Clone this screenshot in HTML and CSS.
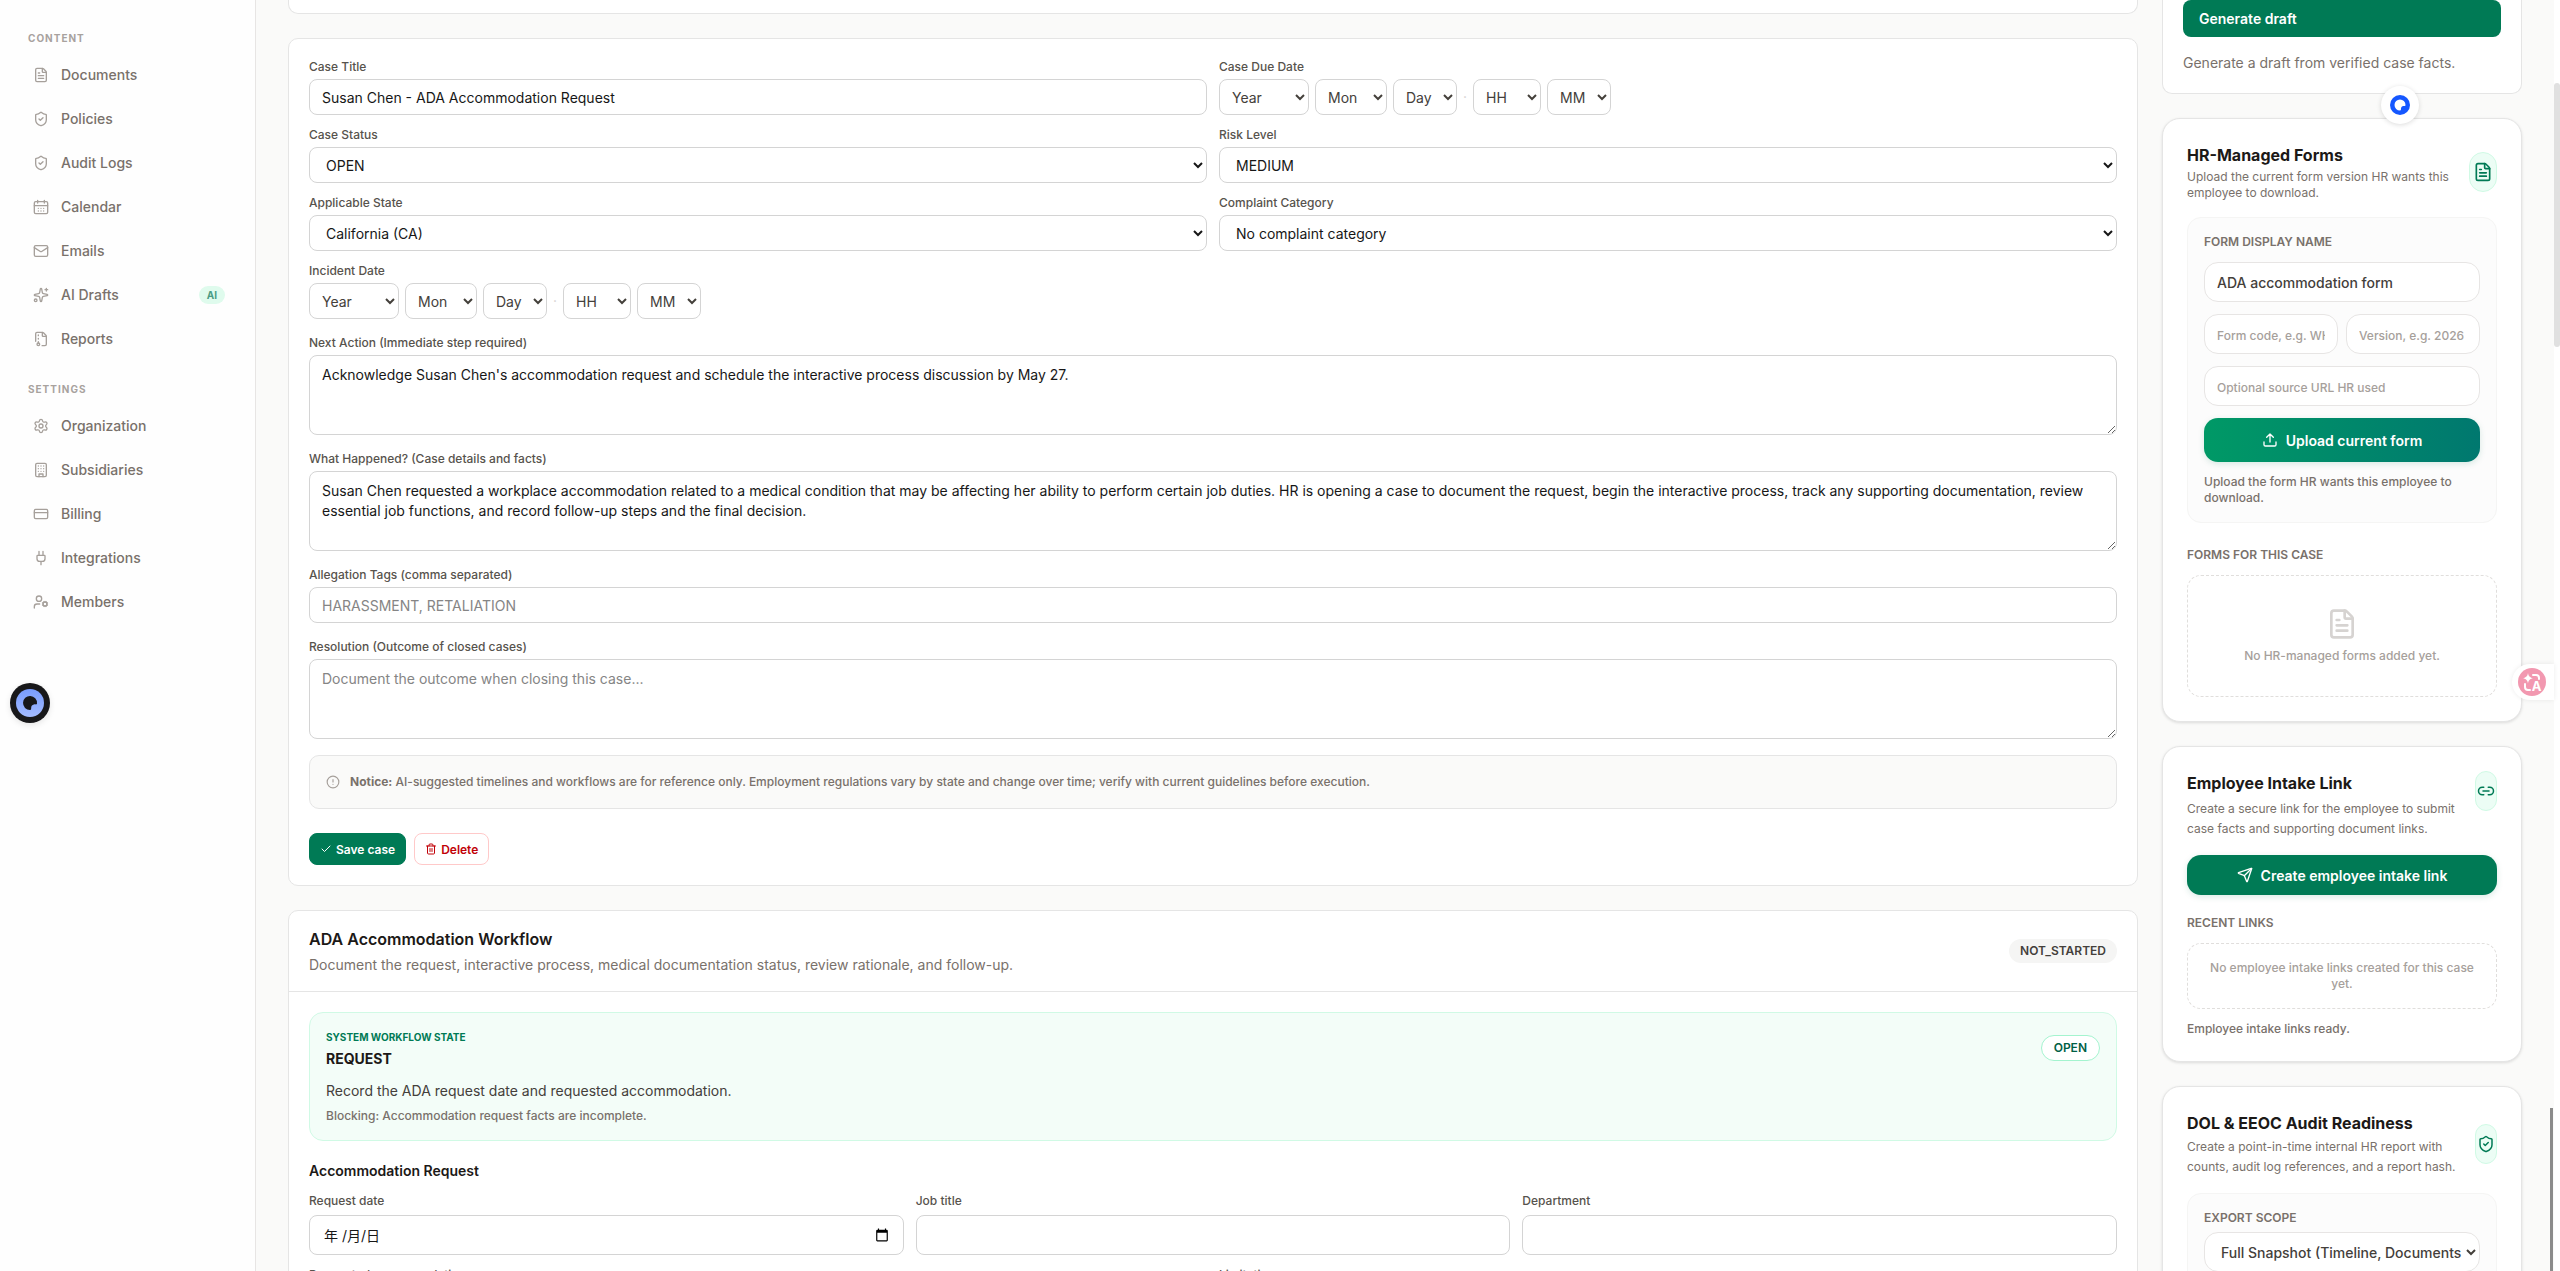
FILE: index.html
```html
<!DOCTYPE html>
<html lang="en">

<head>
    <meta charset="UTF-8">
    <meta name="viewport" content="width=device-width, initial-scale=1.0">
    <title>Susan Chen - ADA Accommodation Request</title>
    <link rel="stylesheet" href="styles.css">
</head>

<body>
    <!-- Shared icons -->
    <svg class="sprite" aria-hidden="true">
        <symbol id="icon-file" viewBox="0 0 24 24">
            <path d="M6 22a2 2 0 0 1-2-2V4a2 2 0 0 1 2-2h8a2.4 2.4 0 0 1 1.704.706l3.588 3.588A2.4 2.4 0 0 1 20 8v12a2 2 0 0 1-2 2z" />
            <path d="M14 2v5a1 1 0 0 0 1 1h5M10 9H8M16 13H8M16 17H8" />
        </symbol>
        <symbol id="icon-shield" viewBox="0 0 24 24">
            <path d="M20 13c0 5-3.5 7.5-7.66 8.95a1 1 0 0 1-.67-.01C7.5 20.5 4 18 4 13V6a1 1 0 0 1 1-1c2 0 4.5-1.2 6.24-2.72a1.17 1.17 0 0 1 1.52 0C14.51 3.81 17 5 19 5a1 1 0 0 1 1 1z" />
            <path d="m9 12 2 2 4-4" />
        </symbol>
    </svg>

    <div class="app">
        <aside class="sidebar">
            <nav class="nav-section">
                <h2>Content</h2>
                <a href="#" class="nav-item"><svg class="icon"><use href="#icon-file" /></svg>Documents</a>
                <a href="#" class="nav-item"><svg class="icon"><use href="#icon-shield" /></svg>Policies</a>
                <a href="#" class="nav-item"><svg class="icon"><use href="#icon-shield" /></svg>Audit Logs</a>
                <a href="#" class="nav-item">
                    <svg class="icon" viewBox="0 0 24 24">
                        <rect x="2" y="4" width="20" height="18" rx="2" />
                        <path d="M7 2v4M17 2v4M2 10h20M8 14h.01M12 14h.01M16 14h.01M8 18h.01M12 18h.01M16 18h.01" />
                    </svg>Calendar
                </a>
                <a href="#" class="nav-item">
                    <svg class="icon" viewBox="0 0 24 24">
                        <rect x="2" y="4" width="20" height="16" rx="2" />
                        <path d="m22 7-8.991 5.727a2 2 0 0 1-2.009 0L2 7" />
                    </svg>Emails
                </a>
                <a href="#" class="nav-item">
                    <svg class="icon" viewBox="0 0 24 24">
                        <path d="M11.017 2.814a1 1 0 0 1 1.966 0l1.051 5.558a2 2 0 0 0 1.594 1.594l5.558 1.051a1 1 0 0 1 0 1.966l-5.558 1.051a2 2 0 0 0-1.594 1.594l-1.051 5.558a1 1 0 0 1-1.966 0l-1.051-5.558a2 2 0 0 0-1.594-1.594l-5.558-1.051a1 1 0 0 1 0-1.966l5.558-1.051a2 2 0 0 0 1.594-1.594z" />
                        <path d="M20 2v4M22 4h-4" />
                        <circle cx="4" cy="20" r="2" />
                    </svg>AI Drafts <span class="nav-badge">AI</span>
                </a>
                <a href="#" class="nav-item">
                    <svg class="icon" viewBox="0 0 24 24">
                        <path d="M13.659 22H18a2 2 0 0 0 2-2V8a2.4 2.4 0 0 0-.706-1.706l-3.588-3.588A2.4 2.4 0 0 0 14 2H6a2 2 0 0 0-2 2v11.5" />
                        <path d="M14 2v5a1 1 0 0 0 1 1h5M8 12v-1M8 18v-2M8 7V6" />
                        <circle cx="8" cy="20" r="2" />
                    </svg>Reports
                </a>
            </nav>
            <nav class="nav-section">
                <h2>Settings</h2>
                <a href="#" class="nav-item">
                    <svg class="icon" viewBox="0 0 24 24">
                        <path d="M9.671 4.136a2.34 2.34 0 0 1 4.659 0 2.34 2.34 0 0 0 3.319 1.915 2.34 2.34 0 0 1 2.33 4.033 2.34 2.34 0 0 0 0 3.831 2.34 2.34 0 0 1-2.33 4.033 2.34 2.34 0 0 0-3.319 1.915 2.34 2.34 0 0 1-4.659 0 2.34 2.34 0 0 0-3.32-1.915 2.34 2.34 0 0 1-2.33-4.033 2.34 2.34 0 0 0 0-3.831A2.34 2.34 0 0 1 6.35 6.051a2.34 2.34 0 0 0 3.319-1.915" />
                        <circle cx="12" cy="12" r="3" />
                    </svg>Organization
                </a>
                <a href="#" class="nav-item">
                    <svg class="icon" viewBox="0 0 24 24">
                        <rect x="4" y="2" width="16" height="20" rx="2" />
                        <path d="M9 22v-4h6v4M8 6h.01M12 6h.01M16 6h.01M8 10h.01M12 10h.01M16 10h.01M8 14h.01M12 14h.01M16 14h.01" />
                    </svg>Subsidiaries
                </a>
                <a href="#" class="nav-item">
                    <svg class="icon" viewBox="0 0 24 24">
                        <rect x="2" y="5" width="20" height="14" rx="2" />
                        <path d="M2 10h20" />
                    </svg>Billing
                </a>
                <a href="#" class="nav-item">
                    <svg class="icon" viewBox="0 0 24 24">
                        <path d="M12 22v-5M15 8V2M9 8V2M17 8a1 1 0 0 1 1 1v4a4 4 0 0 1-4 4h-4a4 4 0 0 1-4-4V9a1 1 0 0 1 1-1z" />
                    </svg>Integrations
                </a>
                <a href="#" class="nav-item">
                    <svg class="icon" viewBox="0 0 24 24">
                        <path d="M10 15H6a4 4 0 0 0-4 4v2" />
                        <circle cx="9" cy="7" r="4" />
                        <circle cx="18" cy="15" r="3" />
                        <path d="m14.305 16.53.923-.382M15.228 13.852l-.923-.383M16.852 12.228l-.383-.923M16.852 17.772l-.383.924M19.148 12.228l.383-.923M19.53 18.696l-.382-.924M20.772 13.852l.924-.383M20.772 16.148l.924.383" />
                    </svg>Members
                </a>
            </nav>
        </aside>

        <main class="content">
            <div class="column">
                <section class="card card-tail"></section>

                <section class="card case-card">
                    <form class="case-form">
                        <div class="two-cols">
                            <div class="field">
                                <label for="caseTitle">Case Title</label>
                                <input type="text" id="caseTitle" value="Susan Chen - ADA Accommodation Request">
                            </div>
                            <div class="field">
                                <label for="dueYear">Case Due Date</label>
                                <div class="date-row">
                                    <select id="dueYear" class="w-year"><option>Year</option></select>
                                    <select class="w-month" aria-label="Due month"><option>Mon</option></select>
                                    <select class="w-day" aria-label="Due day"><option>Day</option></select>
                                    <span class="dot">·</span>
                                    <select class="w-hour" aria-label="Due hour"><option>HH</option></select>
                                    <select class="w-minute" aria-label="Due minute"><option>MM</option></select>
                                </div>
                            </div>
                            <div class="field">
                                <label for="caseStatus">Case Status</label>
                                <select id="caseStatus"><option>OPEN</option></select>
                            </div>
                            <div class="field">
                                <label for="riskLevel">Risk Level</label>
                                <select id="riskLevel"><option>MEDIUM</option></select>
                            </div>
                            <div class="field">
                                <label for="state">Applicable State</label>
                                <select id="state"><option>California (CA)</option></select>
                            </div>
                            <div class="field">
                                <label for="category">Complaint Category</label>
                                <select id="category"><option>No complaint category</option></select>
                            </div>
                            <div class="field">
                                <label for="incidentYear">Incident Date</label>
                                <div class="date-row">
                                    <select id="incidentYear" class="w-year"><option>Year</option></select>
                                    <select class="w-month" aria-label="Incident month"><option>Mon</option></select>
                                    <select class="w-day" aria-label="Incident day"><option>Day</option></select>
                                    <span class="dot">·</span>
                                    <select class="w-hour" aria-label="Incident hour"><option>HH</option></select>
                                    <select class="w-minute" aria-label="Incident minute"><option>MM</option></select>
                                </div>
                            </div>
                        </div>

                        <div class="field">
                            <label for="nextAction">Next Action (Immediate step required)</label>
                            <textarea id="nextAction">Acknowledge Susan Chen's accommodation request and schedule the interactive process discussion by May 27.</textarea>
                        </div>
                        <div class="field">
                            <label for="facts">What Happened? (Case details and facts)</label>
                            <textarea id="facts">Susan Chen requested a workplace accommodation related to a medical condition that may be affecting her ability to perform certain job duties. HR is opening a case to document the request, begin the interactive process, track any supporting documentation, review essential job functions, and record follow-up steps and the final decision.</textarea>
                        </div>
                        <div class="field">
                            <label for="tags">Allegation Tags (comma separated)</label>
                            <input type="text" id="tags" placeholder="HARASSMENT, RETALIATION">
                        </div>
                        <div class="field">
                            <label for="resolution">Resolution (Outcome of closed cases)</label>
                            <textarea id="resolution" placeholder="Document the outcome when closing this case..."></textarea>
                        </div>

                        <div class="notice">
                            <svg class="icon" viewBox="0 0 24 24">
                                <circle cx="12" cy="12" r="10" />
                                <path d="M12 8v4M12 16h.01" />
                            </svg>
                            <p><strong>Notice:</strong> AI-suggested timelines and workflows are for reference only. Employment regulations vary by state and change over time; verify with current guidelines before execution.</p>
                        </div>

                        <div class="actions">
                            <button type="button" class="btn btn-save">
                                <svg class="icon" viewBox="0 0 24 24"><path d="M20 6 9 17l-5-5" /></svg>
                                Save case
                            </button>
                            <button type="button" class="btn btn-delete">
                                <svg class="icon" viewBox="0 0 24 24">
                                    <path d="M10 11v6M14 11v6M19 6v14a2 2 0 0 1-2 2H7a2 2 0 0 1-2-2V6M3 6h18M8 6V4a2 2 0 0 1 2-2h4a2 2 0 0 1 2 2v2" />
                                </svg>
                                Delete
                            </button>
                        </div>
                    </form>
                </section>

                <section class="card">
                    <header class="workflow-header">
                        <div>
                            <h2>ADA Accommodation Workflow</h2>
                            <p>Document the request, interactive process, medical documentation status, review rationale, and follow-up.</p>
                        </div>
                        <span class="pill">NOT_STARTED</span>
                    </header>
                    <div class="workflow-body">
                        <div class="state-box">
                            <div>
                                <p class="state-label">System workflow state</p>
                                <p class="state-name">REQUEST</p>
                                <p class="state-text">Record the ADA request date and requested accommodation.</p>
                                <p class="state-blocking">Blocking: Accommodation request facts are incomplete.</p>
                            </div>
                            <span class="pill pill-open">OPEN</span>
                        </div>

                        <h3>Accommodation Request</h3>
                        <div class="three-cols">
                            <div class="field">
                                <label for="requestDate">Request date</label>
                                <div class="date-input">
                                    <input type="text" id="requestDate" value="年 /月/日">
                                    <button type="button" aria-label="Open calendar">
                                        <svg viewBox="0 0 24 24"><path d="M20 3h-1V1h-2v2H7V1H5v2H4a2 2 0 0 0-2 2v16a2 2 0 0 0 2 2h16a2 2 0 0 0 2-2V5a2 2 0 0 0-2-2zm0 18H4V8h16z" /></svg>
                                    </button>
                                </div>
                            </div>
                            <div class="field">
                                <label for="jobTitle">Job title</label>
                                <input type="text" id="jobTitle">
                            </div>
                            <div class="field">
                                <label for="department">Department</label>
                                <input type="text" id="department">
                            </div>
                        </div>
                        <div class="two-cols">
                            <div class="field">
                                <label for="accommodation">Requested accommodation</label>
                                <textarea id="accommodation"></textarea>
                            </div>
                            <div class="field">
                                <label for="limitation">Limitation</label>
                                <textarea id="limitation"></textarea>
                            </div>
                        </div>
                    </div>
                </section>
            </div>

            <aside class="column">
                <section class="card draft-card">
                    <button type="button" class="btn-draft">Generate draft</button>
                    <p>Generate a draft from verified case facts.</p>
                </section>

                <section class="card side-card">
                    <header>
                        <div>
                            <h2>HR-Managed Forms</h2>
                            <p>Upload the current form version HR wants this employee to download.</p>
                        </div>
                        <span class="icon-badge badge-wide"><svg class="icon"><use href="#icon-file" /></svg></span>
                    </header>
                    <div class="panel">
                        <label for="formName" class="caps">Form display name</label>
                        <input type="text" id="formName" value="ADA accommodation form">
                        <div class="split">
                            <input type="text" aria-label="Form code" placeholder="Form code, e.g. WH-380">
                            <input type="text" aria-label="Version" placeholder="Version, e.g. 2026">
                        </div>
                        <input type="text" aria-label="Source URL" placeholder="Optional source URL HR used">
                        <button type="button" class="btn-upload">
                            <svg class="icon" viewBox="0 0 24 24">
                                <path d="M12 3v12M17 8l-5-5-5 5M21 15v4a2 2 0 0 1-2 2H5a2 2 0 0 1-2-2v-4" />
                            </svg>
                            Upload current form
                        </button>
                        <p>Upload the form HR wants this employee to download.</p>
                    </div>
                    <h3 class="caps forms-title">Forms for this case</h3>
                    <div class="empty empty-forms">
                        <svg class="icon"><use href="#icon-file" /></svg>
                        <p>No HR-managed forms added yet.</p>
                    </div>
                </section>

                <section class="card side-card relaxed">
                    <header class="align-top">
                        <div>
                            <h2>Employee Intake Link</h2>
                            <p>Create a secure link for the employee to submit case facts and supporting document links.</p>
                        </div>
                        <span class="icon-badge">
                            <svg class="icon" viewBox="0 0 24 24"><path d="M9 17H7A5 5 0 0 1 7 7h2M15 7h2a5 5 0 1 1 0 10h-2M8 12h8" /></svg>
                        </span>
                    </header>
                    <button type="button" class="btn-link">
                        <svg class="icon" viewBox="0 0 24 24">
                            <path d="M14.536 21.686a.5.5 0 0 0 .937-.024l6.5-19a.496.496 0 0 0-.635-.635l-19 6.5a.5.5 0 0 0-.024.937l7.93 3.18a2 2 0 0 1 1.112 1.11z" />
                            <path d="m21.854 2.147-10.94 10.939" />
                        </svg>
                        Create employee intake link
                    </button>
                    <h3 class="caps links-title">Recent links</h3>
                    <div class="empty">
                        <p>No employee intake links created for this case yet.</p>
                    </div>
                    <p class="ready">Employee intake links ready.</p>
                </section>

                <section class="card side-card relaxed">
                    <header>
                        <div>
                            <h2>DOL &amp; EEOC Audit Readiness</h2>
                            <p>Create a point-in-time internal HR report with counts, audit log references, and a report hash.</p>
                        </div>
                        <span class="icon-badge"><svg class="icon"><use href="#icon-shield" /></svg></span>
                    </header>
                    <div class="panel panel-scope">
                        <label for="exportScope" class="caps">Export scope</label>
                        <select id="exportScope"><option>Full Snapshot (Timeline, Documents &amp; Forms)</option></select>
                    </div>
                </section>
            </aside>
        </main>

        <div class="page-scroll"><div class="page-thumb"></div></div>
    </div>

    <!-- Floating widgets -->
    <div class="inner-thumb"></div>
    <button type="button" class="float-assist" aria-label="Assistant">
        <svg viewBox="0 0 40 40">
            <defs>
                <linearGradient id="assistFill" x1="0" y1="0" x2="0" y2="1">
                    <stop offset="0" stop-color="#789cff" />
                    <stop offset="1" stop-color="#a3bbff" />
                </linearGradient>
            </defs>
            <circle cx="20" cy="20" r="20" fill="#18181a" />
            <circle cx="20" cy="20" r="14" fill="url(#assistFill)" />
            <path d="M27 20.500a7 7 0 1 0-7 6.500c1.500 0 1-1 1.200-2.500.2-1.700 1-2.600 2.600-3 1.800-.4 3.200.4 3.200-1z" fill="#18181a" />
        </svg>
    </button>
    <button type="button" class="float-chat" aria-label="Chat">
        <svg viewBox="0 0 20 20">
            <circle cx="10" cy="10" r="10" fill="#1557ff" />
            <path d="M15.500 10a5.500 5.500 0 1 0-5.500 5.500c1.200 0 .8-1 1-2 .2-1.300 1-2.200 2.300-2.400 1.200-.2 2.200.1 2.200-1.100z" fill="#fff" />
        </svg>
    </button>
    <button type="button" class="float-translate" aria-label="Translate">
        <svg viewBox="0 0 28 28">
            <circle cx="14" cy="14" r="14" fill="#f298b0" />
            <path d="M10 5c.7 3.400 1.700 4.400 5 5.200-3.300.8-4.300 1.800-5 5.200-.7-3.400-1.700-4.400-5-5.200 3.300-.8 4.300-1.800 5-5.200z" fill="#fff" />
            <path d="M15 7h3a3 3 0 0 1 3 3v1M7 16v3a3 3 0 0 0 3 3h2" fill="none" stroke="#fff" stroke-width="2" stroke-linecap="round" />
            <text x="18.500" y="23" text-anchor="middle">A</text>
        </svg>
    </button>
</body>

</html>
```

FILE: styles.css
```css
* {
    box-sizing: border-box;
}

body {
    margin: 0;
    height: 100vh;
    overflow: hidden;
    font-family: Inter, "Noto Sans CJK SC", sans-serif;
    font-size: 14px;
    line-height: 20px;
    color: #1c1917;
    background-color: #fafaf9;
}

h2,
h3,
p {
    margin: 0;
}

input,
select,
textarea,
button {
    font-family: inherit;
    font-size: 14px;
    color: inherit;
}

button {
    cursor: pointer;
}

.sprite {
    position: absolute;
    width: 0;
    height: 0;
}

.icon {
    width: 16px;
    height: 16px;
    flex-shrink: 0;
    fill: none;
    stroke: currentColor;
    stroke-width: 2;
    stroke-linecap: round;
    stroke-linejoin: round;
}

.app {
    display: flex;
    height: 100vh;
    overflow: hidden;
}

/* Sidebar */
.sidebar {
    width: 256px;
    flex-shrink: 0;
    padding: 29px 16px;
    background-color: #fefefe;
    border-right: 1px solid #e7e5e4;
}

.nav-section {
    display: flex;
    flex-direction: column;
    gap: 4px;
    margin-bottom: 21px;
}

.nav-section h2 {
    padding: 0 12px;
    margin-bottom: 4px;
    font-size: 10px;
    line-height: 18px;
    font-weight: 700;
    letter-spacing: 1px;
    text-transform: uppercase;
    color: #a8a29e;
}

.nav-item {
    display: flex;
    align-items: center;
    gap: 12px;
    height: 40px;
    padding: 0 14px 0 17px;
    font-weight: 500;
    color: #79716b;
    text-decoration: none;
}

.nav-item .icon {
    color: #a6a09b;
}

.nav-badge {
    margin-left: auto;
    padding: 0 8px;
    border-radius: 9px;
    font-size: 10px;
    line-height: 18px;
    font-weight: 700;
    color: #4a9d83;
    background-color: #dffbed;
}

/* Page layout */
.content {
    flex: 1;
    min-width: 0;
    display: grid;
    grid-template-columns: minmax(0, 1fr) 360px;
    gap: 24px;
    padding: 0 32px;
}

.column {
    display: flex;
    flex-direction: column;
    gap: 24px;
}

.card {
    flex-shrink: 0;
    background-color: #fff;
    border: 1px solid #e5e5e5;
    border-radius: 10px;
}

.card-tail {
    height: 14px;
    border-top: 0;
    border-radius: 0 0 10px 10px;
}

/* Case form */
.case-card {
    padding: 20px;
}

.case-form {
    display: flex;
    flex-direction: column;
    gap: 16px;
}

.two-cols {
    display: grid;
    grid-template-columns: 1fr 1fr;
    gap: 12px;
}

.three-cols {
    display: grid;
    grid-template-columns: 1fr 1fr 1fr;
    gap: 12px;
    margin-bottom: 12px;
}

.field {
    display: flex;
    flex-direction: column;
    gap: 4px;
}

.field label {
    font-size: 12px;
    line-height: 16px;
    font-weight: 500;
    color: #57534d;
}

.field input,
.field select,
.field textarea {
    width: 100%;
    height: 36px;
    padding: 0 12px;
    border: 1px solid #d4d4d4;
    border-radius: 8px;
    background-color: #fff;
    color: #171717;
}

.field textarea {
    display: block;
    height: 80px;
    padding: 9px 12px;
    line-height: 20px;
    resize: vertical;
}

.field ::placeholder {
    color: #858585;
}

.date-row {
    display: flex;
    align-items: center;
    gap: 6px;
}

.date-row select {
    padding: 0 8px;
    color: #44403b;
}

.date-row .w-year {
    width: 90px;
}

.date-row .w-month {
    width: 72px;
}

.date-row .w-day,
.date-row .w-minute {
    width: 64px;
}

.date-row .w-hour {
    width: 68px;
}

.dot {
    width: 4px;
    color: #d6d3d1;
}

.notice {
    display: flex;
    align-items: center;
    gap: 10px;
    padding: 16px;
    border: 1px solid #e5e5e5;
    border-radius: 10px;
    background-color: #fafaf9;
    font-size: 12px;
    font-weight: 500;
    color: #79716b;
}

.notice .icon {
    width: 14px;
    height: 14px;
    color: #a6a09b;
}

.actions {
    display: flex;
    gap: 8px;
    margin-top: 8px;
}

.btn {
    display: flex;
    align-items: center;
    justify-content: center;
    gap: 4px;
    height: 32px;
    padding: 0 10px;
    border: 1px solid;
    border-radius: 8px;
    font-size: 12px;
    font-weight: 600;
}

.btn .icon {
    width: 12px;
    height: 12px;
}

.btn-save {
    background-color: #007a55;
    border-color: #007a55;
    color: #fff;
}

.btn-delete {
    background-color: #fff;
    border-color: #ffc9c9;
    color: #c10007;
}

/* Workflow */
.workflow-header {
    display: flex;
    align-items: center;
    justify-content: space-between;
    padding: 16px 20px;
    border-bottom: 1px solid #e5e5e5;
}

.workflow-header h2 {
    margin-bottom: 4px;
    font-size: 16px;
    line-height: 24px;
    font-weight: 600;
}

.workflow-header p {
    color: #79716b;
}

.pill {
    padding: 4px 11px;
    border-radius: 13px;
    font-size: 12px;
    line-height: 16px;
    font-weight: 600;
    color: #44403b;
    background-color: #f5f5f4;
}

.pill-open {
    margin-top: 6px;
    padding: 4px 12px;
    border: 1px solid #a4f4cf;
    color: #006045;
    background-color: #fff;
}

.workflow-body {
    padding: 20px;
}

.state-box {
    display: flex;
    align-items: flex-start;
    justify-content: space-between;
    padding: 16px;
    border: 1px solid #d0fae5;
    border-radius: 14px;
    background-color: #f3fdf8;
}

.state-label {
    font-size: 10px;
    line-height: 16px;
    font-weight: 700;
    text-transform: uppercase;
    color: #007a55;
}

.state-name {
    margin: 4px 0 12px;
    font-weight: 700;
}

.state-text {
    color: #44403b;
}

.state-blocking {
    margin-top: 7px;
    font-size: 12px;
    line-height: 16px;
    font-weight: 500;
    color: #79716b;
}

.workflow-body h3 {
    margin: 20px 0 12px;
    font-size: 14px;
    font-weight: 600;
}

.workflow-body .field {
    gap: 6px;
}

.workflow-body .field input {
    height: 40px;
}

.workflow-body .date-input {
    display: flex;
    align-items: center;
    height: 40px;
    padding: 0 14px;
    border: 1px solid #d4d4d4;
    border-radius: 8px;
}

.date-input button {
    display: flex;
    padding: 0;
    border: 0;
    background: none;
}

.date-input svg {
    width: 14px;
    height: 14px;
}

.workflow-body .date-input input {
    height: 38px;
    padding: 0;
    border: 0;
}

/* Right column */
.draft-card {
    padding: 0 20px 20px;
    border-top: 0;
    border-radius: 0 0 10px 10px;
}

.draft-card p {
    margin-top: 16px;
    color: #79716b;
}

.btn-draft {
    display: block;
    width: 100%;
    height: 37px;
    padding: 0 16px;
    border: 0;
    border-radius: 8px;
    font-weight: 600;
    text-align: left;
    color: #fff;
    background-color: #007a55;
}

.side-card {
    padding: 24px;
    border-radius: 18px;
    box-shadow: 0 1px 3px rgba(0, 0, 0, 0.12);
}

.side-card header {
    display: flex;
    align-items: center;
    justify-content: space-between;
    gap: 12px;
    margin-bottom: 16px;
}

.side-card header.align-top {
    align-items: flex-start;
}

.side-card h2 {
    margin-bottom: 2px;
    font-size: 16px;
    line-height: 24px;
    font-weight: 700;
}

.side-card p {
    font-size: 12px;
    line-height: 16px;
    color: #79716b;
}

.relaxed header p {
    line-height: 20px;
}

.align-top h2 {
    margin-bottom: 4px;
}

.icon-badge {
    display: flex;
    align-items: center;
    justify-content: center;
    width: 22px;
    height: 40px;
    flex-shrink: 0;
    border: 1px solid #d0fae5;
    border-radius: 14px;
    color: #007a55;
    background-color: #ecfdf5;
}

.icon-badge .icon {
    width: 18px;
    height: 18px;
}

.badge-wide {
    width: 28px;
}

.badge-wide .icon {
    width: 20px;
    height: 20px;
}

.panel {
    display: flex;
    flex-direction: column;
    gap: 12px;
    padding: 16px;
    border: 1px solid #f5f5f4;
    border-radius: 14px;
    background-color: #fcfcfc;
}

.panel-scope {
    gap: 6px;
}

.caps {
    font-size: 12px;
    line-height: 16px;
    font-weight: 600;
    text-transform: uppercase;
    color: #79716b;
}

.panel input,
.panel select {
    width: 100%;
    min-width: 0;
    height: 40px;
    padding: 0 12px;
    border: 1px solid #e7e5e4;
    border-radius: 14px;
    background-color: #fff;
    font-weight: 500;
    color: #44403b;
}

.panel select {
    padding-right: 0;
}

.panel input::placeholder {
    font-size: 12px;
    color: #a6a09b;
}

.split {
    display: grid;
    grid-template-columns: 1fr 1fr;
    gap: 8px;
}

.btn-upload,
.btn-link {
    display: flex;
    align-items: center;
    justify-content: center;
    gap: 8px;
    width: 100%;
    height: 44px;
    border: 0;
    border-radius: 14px;
    font-weight: 600;
    color: #fff;
    background: linear-gradient(to right, #009966, #00786f);
    box-shadow: 0 2px 6px rgba(0, 122, 85, 0.15);
}

.btn-link {
    height: 40px;
    background: #007a55;
}

.panel p,
.ready {
    font-weight: 500;
}

.forms-title {
    margin: 24px 0 12px;
}

.links-title {
    margin: 20px 0 12px;
}

.empty {
    padding: 16px;
    border: 1px dashed #e0dedc;
    border-radius: 14px;
    text-align: center;
}

.side-card .empty p {
    font-weight: 500;
    color: #a6a09b;
}

.empty-forms {
    padding: 32px 16px;
}

.empty-forms .icon {
    display: block;
    width: 32px;
    height: 32px;
    margin: 0 auto 8px;
    color: #d6d3d1;
}

.ready {
    margin-top: 12px;
}

/* Scrollbars */
.page-scroll {
    width: 6px;
    padding-top: 83px;
    background-color: #fff;
}

.page-thumb {
    height: 264px;
    border-radius: 3px;
    background-color: #e0e0e0;
}

.inner-thumb {
    position: absolute;
    right: 7px;
    bottom: 0;
    width: 3px;
    height: 163px;
    background-color: #8b8b8b;
}

/* Floating buttons */
.float-assist,
.float-chat,
.float-translate {
    position: absolute;
    display: flex;
    align-items: center;
    padding: 0;
    border: 0;
}

.float-assist {
    left: 10px;
    top: 683px;
    width: 40px;
    height: 40px;
    border-radius: 50%;
    background: none;
    box-shadow: 0 2px 6px rgba(0, 0, 0, 0.1);
}

.float-chat {
    right: 141px;
    top: 86px;
    width: 38px;
    height: 38px;
    justify-content: center;
    border-radius: 50%;
    background-color: #fff;
    box-shadow: 0 1px 5px rgba(0, 0, 0, 0.14);
}

.float-chat svg {
    width: 20px;
    height: 20px;
}

.float-translate {
    right: 6px;
    top: 664px;
    width: 42px;
    height: 36px;
    padding-left: 6px;
    border-radius: 18px 0 0 18px;
    background-color: #fff;
    box-shadow: 0 0 5px rgba(0, 0, 0, 0.08);
}

.float-translate svg {
    width: 28px;
    height: 28px;
}

.float-translate text {
    font-size: 13px;
    font-weight: 700;
    fill: #fff;
}
```
